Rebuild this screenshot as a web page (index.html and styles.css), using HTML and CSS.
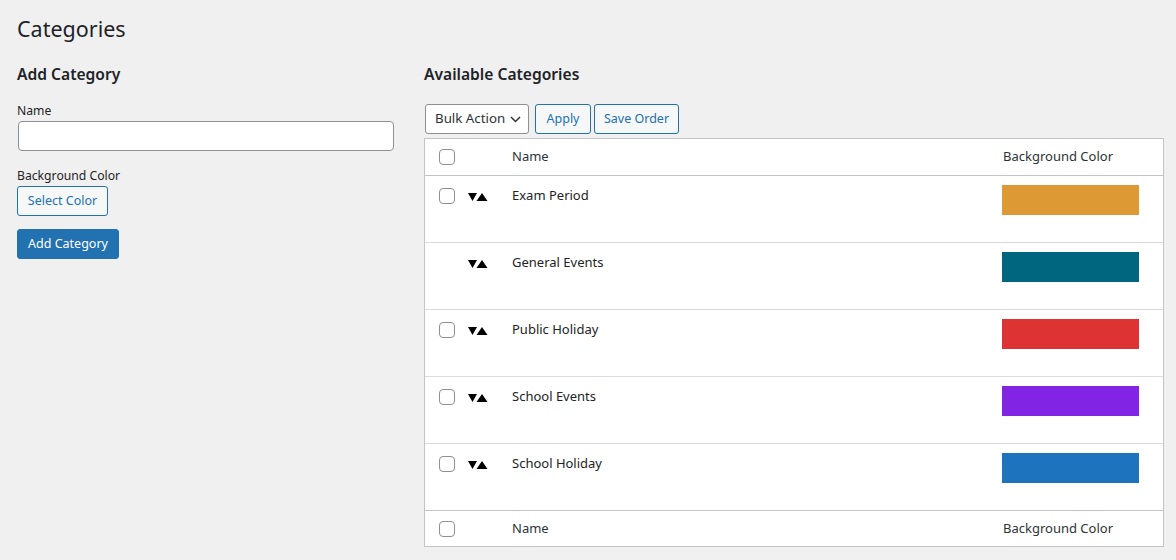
FILE: index.html
```html
<!DOCTYPE html>
<html>
<head>
<meta charset="utf-8">
<link rel="stylesheet" href="styles.css">
</head>
<body>
<div class="wrap">
  <h1 class="page-title">Categories</h1>
  <div class="cols">
    <div class="col-left">
      <h2 class="section-title">Add Category</h2>
      <label class="field-label label-name">Name</label>
      <input class="text-input" type="text">
      <label class="field-label label-color">Background Color</label>
      <button class="btn btn-secondary btn-select">Select Color</button>
      <button class="btn btn-primary btn-add">Add Category</button>
    </div>
    <div class="col-right">
      <h2 class="section-title">Available Categories</h2>
      <div class="toolbar">
        <div class="select">
          <span>Bulk Action</span>
          <svg class="chevron" width="11" height="7" viewBox="0 0 11 7"><path d="M1 1 L5.5 5.5 L10 1" fill="none" stroke="#2c3338" stroke-width="1.5"/></svg>
        </div>
        <button class="btn btn-secondary btn-apply">Apply</button>
        <button class="btn btn-secondary btn-save">Save Order</button>
      </div>
      <div class="table">
        <div class="row head">
          <div class="c-check"><span class="cb"></span></div>
          <div class="c-order"></div>
          <div class="c-name">Name</div>
          <div class="c-color">Background Color</div>
        </div>
        <div class="row item">
          <div class="c-check"><span class="cb"></span></div>
          <div class="c-order"><svg class="arrows" width="20" height="8" viewBox="0 0 20 8"><path d="M0 0 H9 L4.5 8 Z M8.5 8 L14 0 L19.5 8 Z" fill="#000"/></svg></div>
          <div class="c-name">Exam Period</div>
          <div class="c-color"><span class="swatch sw-orange"></span></div>
        </div>
        <div class="row item">
          <div class="c-check"></div>
          <div class="c-order"><svg class="arrows" width="20" height="8" viewBox="0 0 20 8"><path d="M0 0 H9 L4.5 8 Z M8.5 8 L14 0 L19.5 8 Z" fill="#000"/></svg></div>
          <div class="c-name">General Events</div>
          <div class="c-color"><span class="swatch sw-teal"></span></div>
        </div>
        <div class="row item">
          <div class="c-check"><span class="cb"></span></div>
          <div class="c-order"><svg class="arrows" width="20" height="8" viewBox="0 0 20 8"><path d="M0 0 H9 L4.5 8 Z M8.5 8 L14 0 L19.5 8 Z" fill="#000"/></svg></div>
          <div class="c-name">Public Holiday</div>
          <div class="c-color"><span class="swatch sw-red"></span></div>
        </div>
        <div class="row item">
          <div class="c-check"><span class="cb"></span></div>
          <div class="c-order"><svg class="arrows" width="20" height="8" viewBox="0 0 20 8"><path d="M0 0 H9 L4.5 8 Z M8.5 8 L14 0 L19.5 8 Z" fill="#000"/></svg></div>
          <div class="c-name">School Events</div>
          <div class="c-color"><span class="swatch sw-purple"></span></div>
        </div>
        <div class="row item last">
          <div class="c-check"><span class="cb"></span></div>
          <div class="c-order"><svg class="arrows" width="20" height="8" viewBox="0 0 20 8"><path d="M0 0 H9 L4.5 8 Z M8.5 8 L14 0 L19.5 8 Z" fill="#000"/></svg></div>
          <div class="c-name">School Holiday</div>
          <div class="c-color"><span class="swatch sw-blue"></span></div>
        </div>
        <div class="row foot">
          <div class="c-check"><span class="cb"></span></div>
          <div class="c-order"></div>
          <div class="c-name">Name</div>
          <div class="c-color">Background Color</div>
        </div>
      </div>
    </div>
  </div>
</div>
</body>
</html>
```
FILE: styles.css
```css
* { box-sizing: border-box; }
html, body { margin: 0; padding: 0; }
body {
  background: #f0f0f1;
  color: #1d2327;
  font-family: "Noto Sans", "Open Sans", sans-serif;
  font-size: 12.2px;
  line-height: 1.5;
}
.wrap { padding: 14px 12px 0 17px; }
.page-title {
  margin: 0;
  font-size: 21.5px;
  font-weight: 400;
  line-height: 30px;
  color: #1d2327;
}
.cols {
  display: flex;
  gap: 30px;
  margin-top: 19px;
}
.col-left { width: 377px; display: flex; flex-direction: column; align-items: flex-start; }
.col-right { flex: 1; }
.section-title {
  margin: 0;
  font-size: 15.6px;
  font-weight: 600;
  line-height: 22px;
  color: #1d2327;
}
.field-label { display: block; line-height: 19px; }
.label-name { margin-top: 16px; }
.text-input {
  margin: 1px 0 0 1px;
  width: 376px;
  height: 30px;
  border: 1px solid #8c8f94;
  border-radius: 4px;
  background: #fff;
}
.label-color { margin-top: 15px; }
.btn {
  font-family: inherit;
  font-size: 12.5px;
  height: 30px;
  padding: 0 10px;
  border-radius: 3px;
  border: 1px solid #2271b1;
  cursor: pointer;
  line-height: 28px;
}
.btn-secondary { background: #f6f7f7; color: #2271b1; }
.btn-primary { background: #2271b1; color: #fff; }
.btn-select { margin-top: 1px; width: 91px; padding: 0; }
.btn-add { margin-top: 13px; width: 102px; padding: 0; }
.toolbar {
  display: flex;
  align-items: center;
  margin-top: 19px;
  height: 30px;
}
.select {
  width: 104px;
  height: 30px;
  border: 1px solid #8c8f94;
  border-radius: 3px;
  background: #fff;
  color: #2c3338;
  font-size: 13.3px;
  display: flex;
  align-items: center;
  justify-content: space-between;
  padding: 0 7px 0 9px;
  margin-left: 1px;
}
.chevron { display: block; }
.btn-apply { margin-left: 6px; width: 56px; padding: 0; }
.btn-save { margin-left: 3px; width: 85px; padding: 0; }
.table {
  margin-top: 4px;
  width: 740px;
  background: #fff;
  border: 1px solid #c3c4c7;
}
.row { display: flex; font-size: 13px; }
.row.head { height: 37px; border-bottom: 1px solid #c3c4c7; align-items: center; color: #2c3338; }
.row.foot { height: 36px; border-top: 1px solid #c3c4c7; align-items: center; color: #2c3338; }
.row.item { height: 67px; border-bottom: 1px solid #dcdcde; }
.row.item.last { border-bottom: none; height: 66px; }
.c-check { width: 40px; padding-left: 14px; flex: none; }
.c-order { width: 37px; padding-left: 3px; flex: none; }
.c-name { flex: 1; padding-left: 10px; }
.c-color { width: 170px; padding-left: 10px; flex: none; }
.item .c-check { padding-top: 12px; }
.item .c-order { padding-top: 17px; }
.item .c-name { padding-top: 10px; }
.item .c-color { padding-top: 9px; padding-left: 9px; }
.cb {
  display: block;
  width: 16px;
  height: 16px;
  border: 1px solid #8c8f94;
  border-radius: 4px;
  background: #fff;
}
.arrows { display: block; }
.swatch { display: block; width: 137px; height: 30px; }
.sw-orange { background: #dd9933; }
.sw-teal { background: #00667f; }
.sw-red { background: #dd3333; }
.sw-purple { background: #8224e3; }
.sw-blue { background: #1e73be; }
```
